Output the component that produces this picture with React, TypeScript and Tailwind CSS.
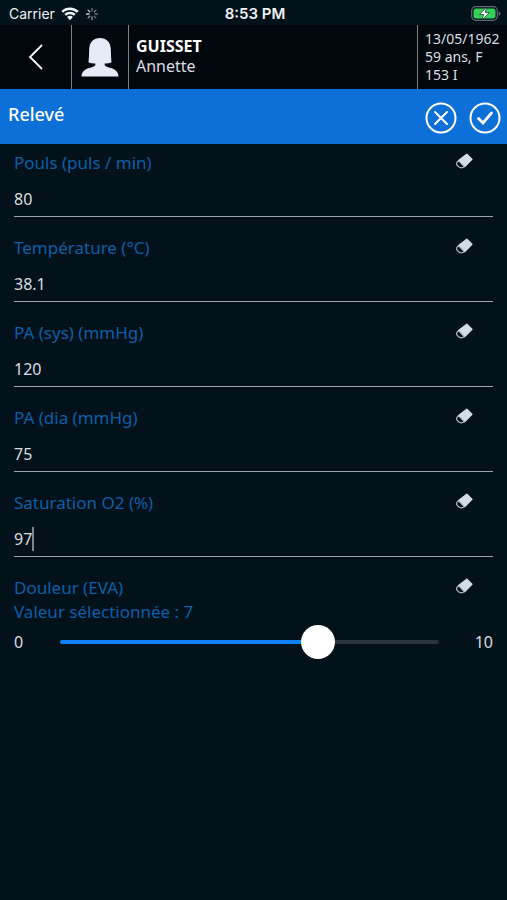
import React, { useState } from "react";

interface Field {
  id: string;
  label: string;
  value: string;
}

const initialFields: Field[] = [
  { id: "pouls", label: "Pouls (puls / min)", value: "80" },
  { id: "temperature", label: "Température (°C)", value: "38.1" },
  { id: "pa-sys", label: "PA (sys) (mmHg)", value: "120" },
  { id: "pa-dia", label: "PA (dia (mmHg)", value: "75" },
  { id: "saturation", label: "Saturation O2 (%)", value: "97" },
];

const WifiIcon = () => (
  <svg viewBox="0 0 18 14" className="w-[18px] h-[14px]" fill="#f2f5f7">
    <path d="M9 0.5c3.3 0 6.3 1.3 8.6 3.4l-1.7 1.9A10.2 10.2 0 0 0 9 3.1c-2.7 0-5.1 1-6.9 2.7L0.4 3.9A12.6 12.6 0 0 1 9 0.5z" />
    <path d="M9 4.7c2.2 0 4.2 0.8 5.7 2.2l-1.7 1.9A5.9 5.9 0 0 0 9 7.2c-1.5 0-2.9 0.6-4 1.6L3.3 6.9A8.4 8.4 0 0 1 9 4.7z" />
    <path d="M9 8.8c1.1 0 2.1 0.4 2.9 1.1L9 13.3 6.1 9.9A4.3 4.3 0 0 1 9 8.8z" />
  </svg>
);

const SpinnerIcon = () => (
  <svg
    viewBox="0 0 14 14"
    className="w-[14px] h-[14px]"
    stroke="#c3cbd0"
    strokeWidth="1.3"
    strokeLinecap="round"
  >
    <path d="M7 1.5V4M10.9 3.1L9.2 4.8" opacity="0.6" />
    <path d="M12.5 7H10M10.9 10.9L9.2 9.2" opacity="0.5" />
    <path d="M7 12.5V10M3.1 10.9l1.7-1.7" opacity="0.8" />
    <path d="M1.5 7H4M3.1 3.1l1.7 1.7" />
  </svg>
);

const BatteryIcon = () => (
  <svg viewBox="0 0 30 15" className="w-[30px] h-[15px]">
    <rect x="0.7" y="0.7" width="25.6" height="13.6" rx="4" fill="none" stroke="#5f6b70" strokeWidth="1.2" />
    <rect x="2.5" y="2.5" width="22" height="10" rx="2.5" fill="#35d05a" />
    <path d="M27.6 5.2c1.2 0.4 1.8 1.3 1.8 2.3s-0.6 1.9-1.8 2.3z" fill="#5f6b70" />
    <path d="M15.6 1L8.6 8.5h4L11 14 18.4 6.5h-4.2z" fill="#fff" stroke="#03121a" strokeWidth="0.6" />
  </svg>
);

const PersonIcon = () => (
  <svg viewBox="0 0 38 40" className="w-[38px] h-10" fill="#e6e9f7">
    <path d="M19 1C25.5 1 29.5 5 29.8 12c0.2 5 0.2 9 0.7 13.2-1.8 1.1-4.3 1.4-6.8 1.4v1.6c0.8 1.3 3 1.9 6.3 2.9 4.2 1.3 7.2 3.6 7.5 8.4H0.5c0.3-4.8 3.3-7.1 7.5-8.4 3.3-1 5.5-1.6 6.3-2.9v-1.6c-2.5 0-5-0.3-6.8-1.4C8 21 8 17 8.2 12 8.5 5 12.5 1 19 1z" />
  </svg>
);

const EraserIcon = () => (
  <svg viewBox="0 0 18 16" className="w-[18px] h-4" strokeLinejoin="round">
    <path d="M11.8 1.2L16.9 6.2 9.8 13.4 3.6 7.6z" fill="#d3dde6" stroke="#d3dde6" strokeWidth="1.4" />
    <path
      d="M3.8 7.8C1.6 8.8 1 10.8 2.4 12.6c1.6 2 4.6 2.6 7 1.2z"
      fill="#03121a"
      stroke="#b3bfc8"
      strokeWidth="1.2"
    />
  </svg>
);

const EraseButton: React.FC<{ label: string; onClick: () => void }> = ({
  label,
  onClick,
}) => (
  <button type="button" aria-label={`Effacer ${label}`} onClick={onClick} className="mr-5 pt-[2px]">
    <EraserIcon />
  </button>
);

const App: React.FC = () => {
  const [fields, setFields] = useState(initialFields);
  const [active, setActive] = useState("saturation");
  const [pain, setPain] = useState(7);

  const update = (id: string, value: string) =>
    setFields(fields.map((f) => (f.id === id ? { ...f, value } : f)));

  return (
    <div className="min-h-screen bg-[#03121a] text-[#d9dfe2] font-['Noto_Sans',sans-serif]">
      {/* Status bar */}
      <div className="grid grid-cols-3 items-center h-[25px] pl-[9px] pr-[6px] pt-[2px] text-[#eef2f4] font-['Inter',sans-serif]">
        <div className="flex items-center gap-[6px] text-sm">
          <span>Carrier</span>
          <WifiIcon />
          <SpinnerIcon />
        </div>
        <span className="text-center text-[15px] leading-5 font-semibold">8:53 PM</span>
        <div className="flex justify-end">
          <BatteryIcon />
        </div>
      </div>

      {/* Patient header */}
      <header className="flex h-16 bg-[#02060d]">
        <button type="button" aria-label="Retour" className="flex items-center justify-center w-[71px]">
          <svg viewBox="0 0 16 26" className="w-4 h-[26px]" fill="none" stroke="#fff" strokeWidth="1.8">
            <path d="M14 1L2 13l12 12" />
          </svg>
        </button>
        <div className="flex items-center justify-center w-[58px] border-x border-[#7d8285]">
          <PersonIcon />
        </div>
        <div className="flex-1 pl-[7px] pt-[11px] text-base leading-5">
          <h1 className="font-bold text-white">GUISSET</h1>
          <p>Annette</p>
        </div>
        <div className="w-[90px] pl-[7px] pt-[5px] border-l border-[#7d8285] text-sm leading-[18px] whitespace-nowrap">
          <p>13/05/1962</p>
          <p>59 ans, F</p>
          <p>153 I</p>
        </div>
      </header>

      {/* Title bar */}
      <div className="flex justify-between h-[55px] pl-2 pr-[6px] bg-[#0d6fd8] text-white">
        <h2 className="pt-[13px] text-lg leading-6 font-medium">Relevé</h2>
        <div className="flex items-center gap-3 pt-[2px]">
          <button type="button" aria-label="Annuler">
            <svg viewBox="0 0 32 32" className="w-8 h-8" fill="none" stroke="#fff" strokeWidth="2" strokeLinecap="round">
              <circle cx="16" cy="16" r="14.5" />
              <path d="M10 10l12 12M22 10L10 22" />
            </svg>
          </button>
          <button type="button" aria-label="Valider">
            <svg viewBox="0 0 32 32" className="w-8 h-8" fill="none" stroke="#fff" strokeWidth="2" strokeLinecap="round">
              <circle cx="16" cy="16" r="14.5" />
              <path d="M9.5 16.5l4.5 4.5 8.5-10" strokeWidth="2.8" />
            </svg>
          </button>
        </div>
      </div>

      <form className="px-[14px] pt-[7px] text-base">
        {fields.map((field) => (
          <div key={field.id} className="mb-[19px]">
            <div className="flex justify-between items-start">
              <label htmlFor={field.id} className="text-[17px] leading-6 text-[#0b5ea9]">
                {field.label}
              </label>
              <EraseButton label={field.label} onClick={() => update(field.id, "")} />
            </div>
            <div className="relative mt-[6px]">
              <input
                id={field.id}
                type="text"
                inputMode="decimal"
                value={field.value}
                onFocus={() => setActive(field.id)}
                onChange={(e) => update(field.id, e.target.value)}
                className="block w-full h-9 bg-transparent border-b border-[#9aa3a8] outline-none caret-transparent"
              />
              {/* Text cursor */}
              {active === field.id && (
                <span className="absolute left-0 top-[6px] flex h-6 pointer-events-none">
                  <span className="invisible">{field.value}</span>
                  <span className="w-[2px] bg-[#7d868b]" />
                </span>
              )}
            </div>
          </div>
        ))}

        <div className="flex justify-between items-start text-[17px] leading-6 text-[#0b5ea9]">
          <label htmlFor="douleur">
            Douleur (EVA)
            <br />
            Valeur sélectionnée : {pain}
          </label>
          <EraseButton label="Douleur (EVA)" onClick={() => setPain(0)} />
        </div>
        <div className="flex items-center justify-between h-9">
          <span className="w-[46px]">0</span>
          <input
            id="douleur"
            type="range"
            min={0}
            max={10}
            value={pain}
            onChange={(e) => setPain(Number(e.target.value))}
            style={{
              backgroundImage: `linear-gradient(to right, #0f82f5 ${pain * 10}%, #27343c ${pain * 10}%)`,
            }}
            className="flex-1 min-w-0 h-1 rounded-full appearance-none [&::-webkit-slider-thumb]:appearance-none [&::-webkit-slider-thumb]:w-[34px] [&::-webkit-slider-thumb]:h-[34px] [&::-webkit-slider-thumb]:rounded-full [&::-webkit-slider-thumb]:bg-white"
          />
          <span className="w-[54px] text-right">10</span>
        </div>
      </form>
    </div>
  );
};

export default App;
